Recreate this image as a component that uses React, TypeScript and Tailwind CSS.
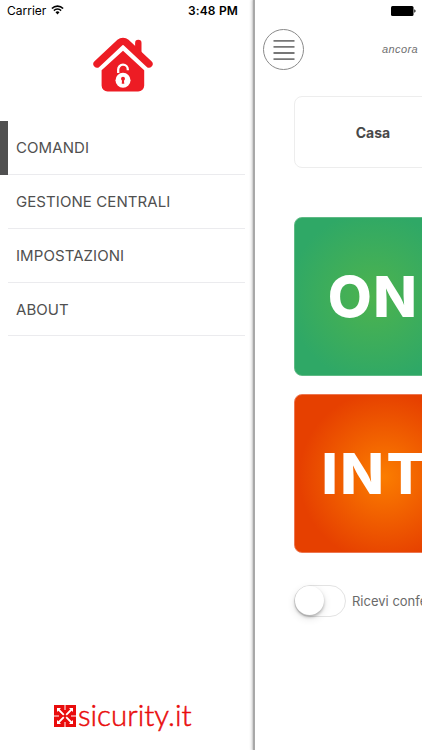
import { clsx } from "clsx";

const menuItems = ["COMANDI", "GESTIONE CENTRALI", "IMPOSTAZIONI", "ABOUT"];

const WifiIcon = () => (
    <svg className="ml-[5px] mt-[5px] h-[10px] w-[13px]" viewBox="0 0 13 10" fill="none">
        <path d="M.9 3.5a8 8 0 0 1 11.2 0" stroke="#000" strokeWidth="1.7" />
        <path d="M2.9 5.6a5.1 5.1 0 0 1 7.2 0" stroke="#000" strokeWidth="1.5" />
        <path d="M4.5 7.3a2.9 2.9 0 0 1 4 0l-2 2.2z" fill="#000" />
    </svg>
);

const HouseLogo = () => (
    <svg className="h-[56px] w-[60px]" viewBox="0 0 60 56">
        <path d="M45.300 6v10" stroke="#ed1c24" strokeWidth="6.400" strokeLinecap="round" />
        <path
            d="M4 27 26.900 5.500a4.600 4.600 0 0 1 6.200 0L56 27"
            fill="none"
            stroke="#ed1c24"
            strokeWidth="7.300"
            strokeLinecap="round"
            strokeLinejoin="round"
        />
        <path
            d="M30 13.800 51.200 33.300V48.500a6 6 0 0 1-6 6H14.600a6 6 0 0 1-6-6V33.300z"
            fill="#ed1c24"
        />
        <path
            d="M25.200 36v-3.500a4.800 4.800 0 0 1 9.600 0v.8"
            fill="none"
            stroke="#fff"
            strokeWidth="2.300"
        />
        <circle cx="30" cy="43.300" r="7.500" fill="#fff" />
        <circle cx="30" cy="41.800" r="2" fill="#ed1c24" />
        <path d="M29.200 42.500h1.600l.5 4.200h-2.600z" fill="#ed1c24" />
    </svg>
);

const BrandMark = () => (
    <svg className="h-[22px] w-[22px]" viewBox="0 0 22 22">
        <path d="M0 0h22v22H0z" fill="#e90c0c" />
        <path d="M11 0v5M11 17v5M0 11h5M17 11h5" stroke="#fff" strokeWidth="1" />
        <path
            d="m4 4 5.800 5.800M18 4l-5.800 5.800M4 18l5.800-5.800M18 18l-5.800-5.800"
            stroke="#fff"
            strokeWidth="1.800"
        />
        <path
            d="M3 3h4l-4 4zM19 3h-4l4 4zM3 19h4l-4-4zM19 19h-4l4-4z"
            fill="#fff"
        />
    </svg>
);

const Sidebar = () => (
    <aside className="flex w-[255px] shrink-0 flex-col bg-white">
        <header className="flex h-[22px] items-start pl-[7px] text-[12px] leading-[22px] text-black">
            <span>Carrier</span>
            <WifiIcon />
            <span className="ml-auto mr-[17px] font-semibold tracking-[0.15px]">3:48 PM</span>
        </header>
        <div className="mt-[15px] flex h-[84.300px] pl-[93px]">
            <HouseLogo />
        </div>
        <nav>
            {menuItems.map((item, index) => (
                <div key={item} className="flex h-[53.800px]">
                    <div className={clsx("w-2", index === 0 && "bg-[#505050]")} />
                    <div className="w-[237px] border-b border-[#ebebee] pl-2 text-[15px] leading-[54px] tracking-[0.080px] text-[#505050]">
                        {item}
                    </div>
                </div>
            ))}
        </nav>
        <footer className="mb-[18px] mt-auto flex h-[32px] items-center gap-[2px] pl-[54px]">
            <BrandMark />
            <span className="-mt-[2px] font-['Lato',sans-serif] text-[29.500px] leading-[32px] font-light text-[#e90c0c] [-webkit-text-stroke:0.500px_#e90c0c]">
                sicurity.it
            </span>
        </footer>
    </aside>
);

const Battery = () => (
    <svg className="h-[10px] w-[25px]" viewBox="0 0 25 10">
        <rect width="22.500" height="10" rx="1.500" />
        <path d="M23.300 3.300c1.700.6 1.700 2.800 0 3.400z" />
    </svg>
);

const Main = () => (
    <main className="flex w-[422px] shrink-0 flex-col bg-white shadow-[-1px_0_1px_1px_#a8a8a8,-2px_0_3px_1px_#c8c8c8]">
        <div className="h-[29px] pl-[136px] pt-[6px]">
            <Battery />
        </div>
        <div className="flex h-[41px] items-center pl-[8px]">
            <button className="flex h-[41px] w-[41px] items-center justify-center rounded-full border border-[#8a8a8a]">
                <svg className="h-[22px] w-[22px]" viewBox="0 0 22 22">
                    <path
                        d="M.5 1.800h21M.5 7.900h21M.5 14h21M.5 20.100h21"
                        stroke="#777"
                        strokeWidth="1.800"
                    />
                </svg>
            </button>
            <span className="ml-[78px] font-['Liberation_Sans',sans-serif] text-[11px] italic tracking-[0.4px] text-[#707070]">
                ancora
            </span>
        </div>
        <div className="ml-[39px] mt-[26px] flex h-[72px] w-[158px] items-center justify-center rounded-lg border border-[#ededed] text-[14px] font-bold text-[#484848]">
            Casa
        </div>
        <button className="ml-[39px] mt-[49px] flex h-[159px] w-[158px] items-center justify-center rounded-lg border border-[#5fba85] bg-[radial-gradient(circle_at_50%_50%,#4db34e_0%,#2fa866_85px)] text-[57px] font-extrabold tracking-[1.500px] text-white">
            ON
        </button>
        <button className="ml-[39px] mt-[18px] flex h-[159px] w-[158px] items-center justify-center rounded-lg border border-[#ed7650] bg-[radial-gradient(circle_at_57%_52%,#fb7d00_0%,#e64000_85px)] pl-[3px] text-[57px] font-extrabold tracking-[2.500px] text-white">
            INT
        </button>
        <div className="ml-[39px] mt-[32px] flex items-center">
            <div className="h-[32px] w-[52px] rounded-full border-[1.500px] border-[#e3e3e3]">
                <div className="h-[29px] w-[29px] rounded-full bg-white shadow-[0_2px_3px_rgba(0,0,0,0.25),0_3px_8px_rgba(0,0,0,0.12)]" />
            </div>
            <span className="ml-[6px] mt-[1px] whitespace-nowrap text-[13px] text-[#6a6a6a]">Ricevi confe</span>
        </div>
    </main>
);

const App = () => {
    return (
        <div className="flex h-[750px] w-[422px] overflow-hidden bg-white font-['Inter',sans-serif]">
            <Sidebar />
            <Main />
        </div>
    );
};

export default App;
